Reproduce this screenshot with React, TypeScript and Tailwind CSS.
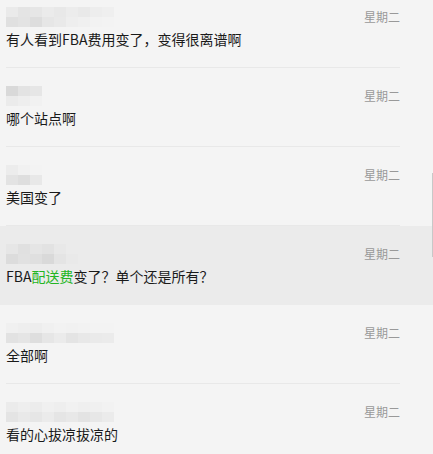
const rows = [
  {
    text: <>有人看到FBA费用变了，变得很离谱啊</>,
    blur: [
      ['bg-[#eaeaea]', 'bg-[#e4e4e4]', 'bg-[#e6e6e6]', 'bg-[#ebebeb]', 'bg-[#e8e8e8]', 'bg-[#ececec]', 'bg-[#e9e9e9]', 'bg-[#ededed]', 'bg-[#efefef]'],
      ['bg-[#e0e0e0]', 'bg-[#e3e3e3]', 'bg-[#dddddd]', 'bg-[#e6e6e6]', 'bg-[#e9e9e9]', 'bg-[#eeeeee]', 'bg-[#f0f0f0]', 'bg-[#f2f2f2]', 'bg-[#f3f3f3]'],
    ],
  },
  {
    text: <>哪个站点啊</>,
    blur: [
      ['bg-[#d9d9d9]', 'bg-[#e3e3e3]', 'bg-[#e6e6e6]'],
      ['bg-[#ebebeb]', 'bg-[#eeeeee]', 'bg-[#f1f1f1]'],
    ],
  },
  {
    text: <>美国变了</>,
    blur: [
      ['bg-[#ececec]', 'bg-[#f1f1f1]', 'bg-[#f3f3f3]'],
      ['bg-[#e3e3e3]', 'bg-[#dedede]', 'bg-[#e8e8e8]'],
    ],
  },
  {
    text: (
      <>
        FBA<span className="text-[#23b523]">配送费</span>变了？单个还是所有？
      </>
    ),
    blur: [
      ['bg-[#e6e6e6]', 'bg-[#e0e0e0]', 'bg-[#e5e5e5]', 'bg-[#e2e2e2]', 'bg-[#e8e8e8]', 'bg-[#ebebeb]'],
      ['bg-[#dcdcdc]', 'bg-[#e1e1e1]', 'bg-[#dfdfdf]', 'bg-[#d9d9d9]', 'bg-[#e4e4e4]', 'bg-[#e9e9e9]'],
    ],
    active: true,
  },
  {
    text: <>全部啊</>,
    blur: [
      ['bg-[#f0f0f0]', 'bg-[#eeeeee]', 'bg-[#ededed]', 'bg-[#f0f0f0]', 'bg-[#f2f2f2]', 'bg-[#f1f1f1]', 'bg-[#f2f2f2]', 'bg-[#f3f3f3]', 'bg-[#f3f3f3]'],
      ['bg-[#e2e2e2]', 'bg-[#e5e5e5]', 'bg-[#dedede]', 'bg-[#e6e6e6]', 'bg-[#ebebeb]', 'bg-[#e4e4e4]', 'bg-[#e8e8e8]', 'bg-[#eaeaea]', 'bg-[#ebebeb]'],
    ],
  },
  {
    text: <>看的心拔凉拔凉的</>,
    blur: [
      ['bg-[#ebebeb]', 'bg-[#eeeeee]', 'bg-[#ececec]', 'bg-[#f0f0f0]', 'bg-[#eeeeee]', 'bg-[#f1f1f1]', 'bg-[#efefef]', 'bg-[#f0f0f0]', 'bg-[#f2f2f2]'],
      ['bg-[#e4e4e4]', 'bg-[#e9e9e9]', 'bg-[#e6e6e6]', 'bg-[#ebebeb]', 'bg-[#e5e5e5]', 'bg-[#e8e8e8]', 'bg-[#e3e3e3]', 'bg-[#e7e7e7]', 'bg-[#ebebeb]'],
    ],
  },
];

function Blur({ cells }: { cells: string[][] }) {
  return (
    <div className="flex flex-col">
      {cells.map((line, i) => (
        <div key={i} className="flex">
          {line.map((c, j) => (
            <div key={j} className={`w-[12px] h-[10px] ${c}`} />
          ))}
        </div>
      ))}
    </div>
  );
}

export default function App() {
  return (
    <div
      className="relative w-[433px] h-[454px] overflow-hidden bg-[#f4f4f4]"
      style={{ fontFamily: '"Noto Sans CJK SC", "Microsoft YaHei", sans-serif' }}
    >
      <div className="-mt-[11px]">
        {rows.map((r, i) => (
          <div key={i} className={r.active ? 'bg-[#ebebeb]' : ''}>
            <div className="pl-[6px] pr-[33px]">
              <div className={`pt-[18px] pb-[16px] ${r.active ? '' : 'border-b border-[#e8e8e8]'}`}>
                <div className="flex items-center justify-between h-5">
                  <Blur cells={r.blur} />
                  <span className="text-[12px] text-[#999999] leading-5">星期二</span>
                </div>
                <div className="text-[14px] leading-[24px] text-[#1a1a1a]">{r.text}</div>
              </div>
            </div>
            {r.active && <div className="h-px" />}
          </div>
        ))}
      </div>
      <div className="absolute right-0 top-[173px] w-px h-[84px] bg-[#c8c8c8]" />
    </div>
  );
}
